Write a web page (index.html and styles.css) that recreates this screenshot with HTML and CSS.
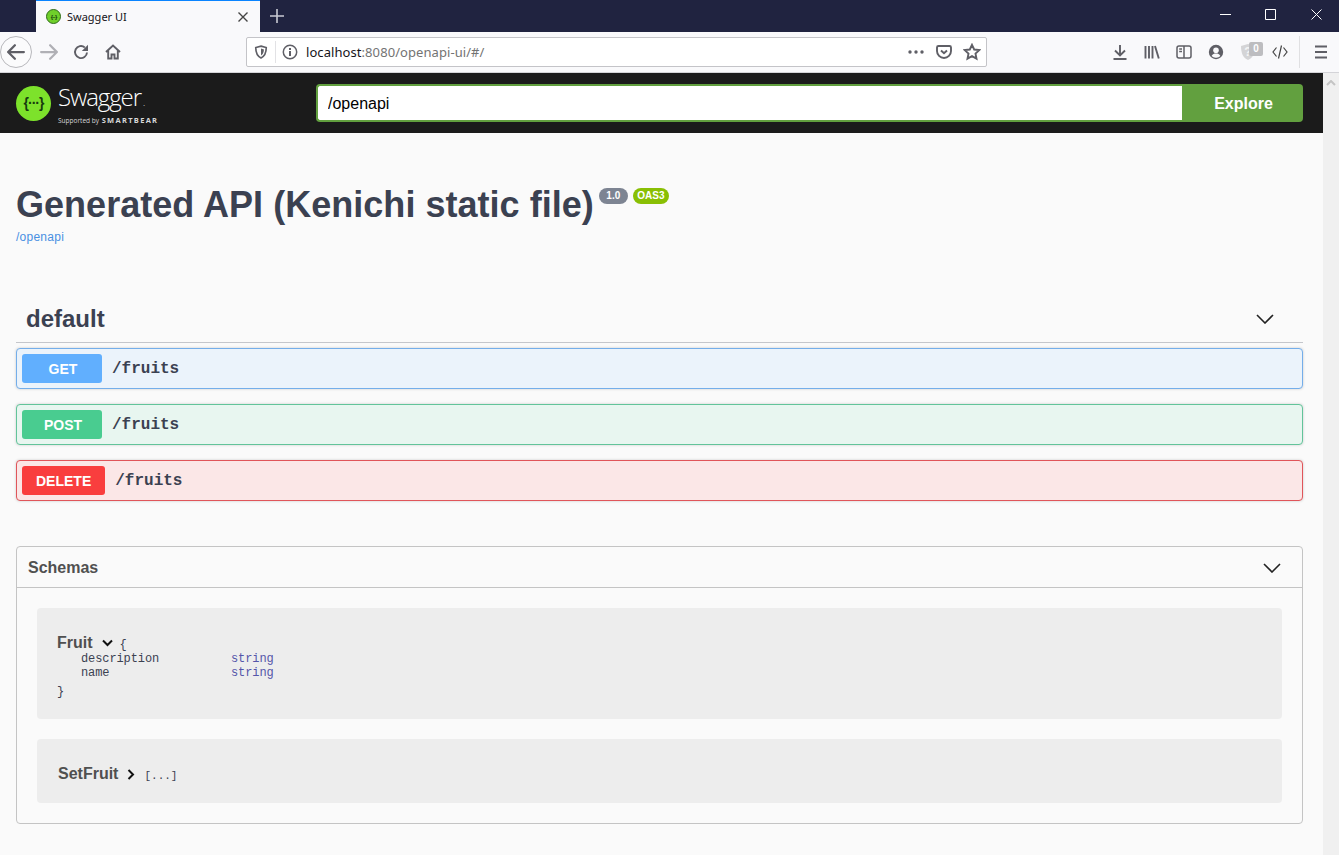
FILE: index.html
```html
<!DOCTYPE html>
<html lang="en">
<head>
    <meta charset="UTF-8">
    <meta name="viewport" content="width=device-width, initial-scale=1.0">
    <title>Swagger UI</title>
    <link rel="stylesheet" href="styles.css">
</head>
<body>
<div class="browser">
    <div class="tabbar">
        <div class="tab">
            <span class="favicon">{···}</span>
            <span class="tab-title">Swagger UI</span>
            <svg class="tab-close" width="12" height="12" viewBox="0 0 12 12"><path d="M1.5 1.5l9 9M10.5 1.5l-9 9"/></svg>
        </div>
        <svg class="tab-new" width="14" height="14" viewBox="0 0 14 14"><path d="M7 0v14M0 7h14"/></svg>
        <div class="window-controls">
            <div class="window-btn"><svg width="11" height="11" viewBox="0 0 11 11"><path d="M0 5.5h11"/></svg></div>
            <div class="window-btn"><svg width="11" height="11" viewBox="0 0 11 11"><path d="M.5.5h10v10H.5z"/></svg></div>
            <div class="window-btn"><svg width="11" height="11" viewBox="0 0 11 11"><path d="M.5.5l10 10M10.5.5l-10 10"/></svg></div>
        </div>
    </div>

    <div class="toolbar">
        <div class="nav-btn back">
            <svg width="18" height="18" viewBox="0 0 16 16"><path class="fill" d="M15 7H3.414l4.293-4.293a1 1 0 0 0-1.414-1.414l-6 6a1 1 0 0 0 0 1.414l6 6a1 1 0 0 0 1.414-1.414L3.414 9H15a1 1 0 0 0 0-2z"/></svg>
        </div>
        <div class="nav-btn forward">
            <svg width="18" height="18" viewBox="0 0 16 16"><path class="fill" d="M1 7h11.586L8.293 2.707a1 1 0 0 1 1.414-1.414l6 6a1 1 0 0 1 0 1.414l-6 6a1 1 0 0 1-1.414-1.414L12.586 9H1a1 1 0 0 1 0-2z"/></svg>
        </div>
        <div class="nav-btn">
            <svg width="16" height="16" viewBox="0 0 16 16"><path class="line" d="M14 8.5A6 6 0 1 1 11.8 3.4"/><path class="fill" d="M15 .8v6.2H8.8z"/></svg>
        </div>
        <div class="nav-btn">
            <svg width="16" height="16" viewBox="0 0 16 16"><path class="line" d="M1 8l7-6.5L15 8M3.2 6.5V14.5h3.3v-4h3v4h3.3V6.5"/></svg>
        </div>

        <div class="urlbar">
            <svg class="url-shield" width="14" height="14" viewBox="0 0 16 16"><path class="line" d="M8 1.3l6 1.6c0 6-1.6 9.800-6 11.900C3.600 12.700 2 8.900 2 2.900z"/><path class="fill" d="M8 4v8c2-1.300 3.200-3.500 3.400-6.800z"/></svg>
            <span class="url-sep"></span>
            <svg class="url-info" width="16" height="16" viewBox="0 0 16 16"><circle class="thin" cx="8" cy="8" r="6.700"/><path class="fill" d="M7 7h2v5H7zM7 4h2v2H7z"/></svg>
            <span class="url-text">localhost<span class="url-rest">:8080/openapi-ui/#/</span></span>
            <svg class="url-dots" width="16" height="4" viewBox="0 0 16 4"><circle class="fill" cx="2" cy="2" r="1.700"/><circle class="fill" cx="8" cy="2" r="1.700"/><circle class="fill" cx="14" cy="2" r="1.700"/></svg>
            <svg class="url-pocket" width="16" height="16" viewBox="0 0 16 16"><path class="line" d="M2.500 2h11A1.500 1.500 0 0 1 15 3.500V7A7 7 0 0 1 1 7V3.500A1.500 1.500 0 0 1 2.500 2z"/><path class="line" d="M5 6.500L8 9.300l3-2.800"/></svg>
            <svg class="url-star" width="18" height="18" viewBox="0 0 18 18"><path class="line" d="M9 1.800l2.200 4.700 5.100.6-3.800 3.500 1 5.100L9 13.200l-4.500 2.500 1-5.100L1.700 7.100l5.100-.6z"/></svg>
        </div>

        <div class="toolbar-right">
            <div class="tool-btn"><svg width="16" height="16" viewBox="0 0 16 16"><path class="line" d="M8 1v9.500M3 6.500l5 5 5-5M1.500 15h13"/></svg></div>
            <div class="tool-btn"><svg width="16" height="16" viewBox="0 0 16 16"><path class="line" d="M1.500 2v12.500M5 2v12.500M8.500 2v12.500M11 2l3.800 12.500"/></svg></div>
            <div class="tool-btn"><svg width="16" height="16" viewBox="0 0 16 16"><rect class="thin" x="1" y="2" width="14" height="12" rx="2"/><path class="thin" d="M8 2v12M3.200 5H6M3.200 7.500H6"/></svg></div>
            <div class="tool-btn"><svg width="16" height="16" viewBox="0 0 16 16"><circle class="fill" cx="8" cy="8" r="7.200"/><circle class="hole" cx="8" cy="6.300" r="2.800"/><path class="hole" d="M3.600 12c1-1.800 2.600-2.400 4.400-2.400s3.400.6 4.400 2.400A5.500 5.500 0 0 1 8 13.800 5.500 5.500 0 0 1 3.600 12z"/></svg></div>
            <div class="tool-btn ext">
                <svg width="18" height="18" viewBox="0 0 18 18"><path class="shield-grey" d="M9 1l7 2c0 7-2 12-7 14C4 15 2 10 2 3z"/><text x="9" y="13" class="shield-mark">?</text></svg>
                <span class="ext-badge">0</span>
            </div>
            <div class="tool-btn"><svg width="16" height="16" viewBox="0 0 16 16"><path class="thin-dark" d="M4.500 3.500L1 8l3.500 4.500M11.500 3.500L15 8l-3.500 4.500M9.500 1.500l-3 13"/></svg></div>
        </div>
        <span class="toolbar-sep"></span>
        <div class="tool-btn menu"><svg width="14" height="14" viewBox="0 0 14 14"><path class="line" d="M1 1.500h12M1 7h12M1 12.500h12"/></svg></div>
    </div>

    <div class="viewport">
        <div class="swagger">
            <div class="topbar">
                <div class="logo">
                    <span class="logo-mark">{···}</span>
                    <div class="logo-text">
                        <span class="logo-name">Swagger<small>.</small></span>
                        <span class="logo-sub">Supported by <b>SMARTBEAR</b></span>
                    </div>
                </div>
                <form class="search">
                    <input class="search-input" type="text" value="/openapi">
                    <button class="search-btn" type="button">Explore</button>
                </form>
            </div>

            <div class="content">
                <div class="info">
                    <div class="title">
                        <h2>Generated API (Kenichi static file)</h2>
                        <span class="version">1.0</span>
                        <span class="oas">OAS3</span>
                    </div>
                    <a class="base-url" href="#">/openapi</a>
                </div>

                <div class="tag">
                    <h3>default</h3>
                    <svg class="chevron" width="18" height="10" viewBox="0 0 18 10"><path d="M1 1l8 8 8-8"/></svg>
                </div>

                <div class="op op-get"><span class="method">GET</span><span class="path">/fruits</span></div>
                <div class="op op-post"><span class="method">POST</span><span class="path">/fruits</span></div>
                <div class="op op-delete"><span class="method">DELETE</span><span class="path">/fruits</span></div>

                <div class="schemas">
                    <div class="schemas-head">
                        <h4>Schemas</h4>
                        <svg class="chevron" width="18" height="10" viewBox="0 0 18 10"><path d="M1 1l8 8 8-8"/></svg>
                    </div>
                    <div class="schemas-body">
                        <div class="model model-open">
                            <div class="model-head">
                                <span class="model-name">Fruit</span>
                                <svg class="model-arrow" width="11" height="8" viewBox="0 0 11 8"><path d="M1 1.500l4.500 4.500L10 1.500"/></svg>
                                <span class="brace">{</span>
                            </div>
                            <div class="prop"><span class="prop-name">description</span><span class="prop-type">string</span></div>
                            <div class="prop"><span class="prop-name">name</span><span class="prop-type">string</span></div>
                            <div class="brace brace-end">}</div>
                        </div>
                        <div class="model model-closed">
                            <span class="model-name">SetFruit</span>
                            <svg class="model-arrow arrow-right" width="8" height="11" viewBox="0 0 8 11"><path d="M1.500 1L6 5.500 1.500 10"/></svg>
                            <span class="brace">[...]</span>
                        </div>
                    </div>
                </div>
            </div>
        </div>
        <div class="scrollbar">
            <svg width="10" height="6" viewBox="0 0 10 6"><path d="M1 5l4-4 4 4"/></svg>
        </div>
    </div>
</div>
</body>
</html>
```

FILE: styles.css
```css
html, body {
    margin: 0;
    height: 100%;
    overflow: hidden;
}
body {
    font-family: "Liberation Sans", Arial, sans-serif;
    background: #fafafa;
}
.browser {
    display: flex;
    flex-direction: column;
    height: 100%;
}

/* browser chrome */
.tabbar {
    display: flex;
    align-items: center;
    height: 32px;
    padding-left: 36px;
    background: #202340;
}
.tab {
    display: flex;
    align-items: center;
    box-sizing: border-box;
    width: 224px;
    height: 32px;
    padding: 0 11px 0 10px;
    background: #f9f9fb;
    border-top: 1px solid #0a84ff;
}
.favicon {
    display: flex;
    align-items: center;
    justify-content: center;
    box-sizing: border-box;
    width: 15px;
    height: 15px;
    border-radius: 50%;
    background: #6fcf2a;
    border: 1px solid #2f6b1a;
    color: #173b0f;
    font-size: 6px;
    font-weight: bold;
    letter-spacing: -1px;
}
.tab-title {
    flex: 1;
    margin-left: 6px;
    font-family: "Noto Sans", sans-serif;
    font-size: 11px;
    color: #15141a;
}
.tab-close path {
    fill: none;
    stroke: #444;
    stroke-width: 1.4;
}
.tab-new {
    margin-left: 10px;
}
.tab-new path {
    fill: none;
    stroke: #c9cad3;
    stroke-width: 1.6;
}
.window-controls {
    display: flex;
    box-sizing: border-box;
    width: 137px;
    margin-left: auto;
    padding-left: 1px;
}
.window-btn {
    flex: 1;
    display: flex;
    justify-content: center;
    margin-top: -3px;
}
.window-btn path {
    fill: none;
    stroke: #fff;
    stroke-width: 1;
}
.toolbar {
    display: flex;
    align-items: center;
    box-sizing: border-box;
    height: 41px;
    background: #f9f9fb;
    border-bottom: 1px solid #d4d4d8;
}
.fill {
    fill: #5f5f66;
}
.line {
    fill: none;
    stroke: #5f5f66;
    stroke-width: 1.9;
}
.thin {
    fill: none;
    stroke: #5f5f66;
    stroke-width: 1.5;
}
.thin-dark {
    fill: none;
    stroke: #444;
    stroke-width: 1.2;
}
.hole {
    fill: #f9f9fb;
}
.nav-btn {
    display: flex;
    align-items: center;
    justify-content: center;
    box-sizing: border-box;
    width: 32px;
    height: 32px;
}
.nav-btn.back {
    border: 1px solid #b8b8bc;
    border-radius: 50%;
    background: #fbfbfc;
}
.nav-btn.forward {
    margin-left: 1px;
}
.nav-btn.forward .fill {
    fill: #b0b0b5;
}
.urlbar {
    display: flex;
    align-items: center;
    box-sizing: border-box;
    width: 741px;
    height: 30px;
    margin-left: 117px;
    padding: 0 5px 0 7px;
    background: #fff;
    border: 1px solid #c4c4c8;
    border-radius: 2px;
}
.url-sep {
    width: 1px;
    height: 22px;
    margin: 0 6px 0 7px;
    background: #e2e2e5;
}
.url-text {
    flex: 1;
    margin-left: 8px;
    font-family: "Noto Sans", sans-serif;
    font-size: 13px;
    letter-spacing: 0.07px;
    color: #15141a;
}
.url-rest {
    color: #737373;
}
.url-pocket {
    margin-left: 12px;
}
.url-star {
    margin-left: 11px;
}
.toolbar-right {
    display: flex;
    margin-left: 117px;
}
.tool-btn {
    position: relative;
    display: flex;
    align-items: center;
    justify-content: center;
    width: 32px;
    height: 32px;
}
.shield-grey {
    fill: #d4d4d6;
}
.shield-mark {
    font-size: 12px;
    font-weight: bold;
    fill: #f4f4f4;
    text-anchor: middle;
}
.ext-badge {
    position: absolute;
    top: 6px;
    right: 1px;
    width: 14px;
    height: 14px;
    border-radius: 2px;
    background: #bdbdc0;
    color: #fff;
    font-size: 10px;
    font-weight: bold;
    line-height: 14px;
    text-align: center;
}
.toolbar-sep {
    width: 1px;
    height: 32px;
    margin: 0 5px 0 3px;
    background: #e0e0e2;
}

/* page */
.viewport {
    flex: 1;
    display: flex;
    min-height: 0;
}
.swagger {
    flex: 1;
    min-width: 0;
    background: #fafafa;
}
.scrollbar {
    width: 16px;
    background: #f0f0f0;
    padding-top: 7px;
    box-sizing: border-box;
}
.scrollbar svg {
    display: block;
    margin: 0 auto;
}
.scrollbar path {
    fill: none;
    stroke: #c4c4c4;
    stroke-width: 2;
}
.topbar {
    display: flex;
    align-items: center;
    box-sizing: border-box;
    height: 60px;
    padding: 0 20px 0 16px;
    background: #1b1b1b;
}
.logo {
    display: flex;
    align-items: center;
    width: 300px;
}
.logo-mark {
    display: flex;
    align-items: center;
    justify-content: center;
    width: 35px;
    height: 35px;
    border-radius: 50%;
    background: #7de22b;
    color: #173b0f;
    font-size: 14px;
    font-weight: bold;
    letter-spacing: -1px;
}
.logo-text {
    display: flex;
    flex-direction: column;
    margin-left: 7px;
    padding-top: 3px;
    color: #fff;
}
.logo-name {
    font-family: "Open Sans", sans-serif;
    font-size: 24px;
    font-weight: 300;
    line-height: 26px;
    letter-spacing: -1.1px;
}
.logo-name small {
    font-size: 9px;
    margin-left: 2px;
}
.logo-sub {
    font-family: "Open Sans", sans-serif;
    font-size: 6.5px;
    line-height: 9px;
    color: #d8d8d8;
}
.logo-sub b {
    margin-left: 1px;
    font-size: 7.5px;
    letter-spacing: 1.3px;
}
.search {
    flex: 1;
    display: flex;
    height: 38px;
}
.search-input {
    flex: 1;
    min-width: 0;
    box-sizing: border-box;
    padding: 2px 10px 0;
    background: #fff;
    border: 2px solid #62a03f;
    border-right: 0;
    border-radius: 4px 0 0 4px;
    font-family: "Liberation Sans", Arial, sans-serif;
    font-size: 16px;
    color: #000;
    outline: none;
}
.search-btn {
    width: 121px;
    padding: 2px 0 0 2px;
    background: #62a03f;
    border: 0;
    border-radius: 0 4px 4px 0;
    font-family: "Liberation Sans", Arial, sans-serif;
    font-size: 16px;
    font-weight: bold;
    color: #fff;
}
.content {
    padding: 0 20px 0 16px;
}
.info {
    padding-top: 50px;
}
.title {
    display: flex;
    align-items: flex-start;
    color: #3b4151;
}
.title h2 {
    margin: 0;
    font-size: 36px;
    line-height: 43px;
    font-weight: bold;
    letter-spacing: 0.03px;
}
.version, .oas {
    height: 16px;
    margin-top: 5px;
    border-radius: 57px;
    color: #fff;
    font-size: 10px;
    font-weight: bold;
    line-height: 16px;
}
.version {
    margin-left: 5px;
    padding: 0 7.5px;
    background: #7d8492;
}
.oas {
    margin-left: 5px;
    padding: 0 4.5px;
    background: #89bf04;
}
.base-url {
    display: block;
    margin-top: 4px;
    font-size: 12px;
    line-height: 14px;
    letter-spacing: 0.25px;
    color: #4990e2;
    text-decoration: none;
}
.tag {
    display: flex;
    align-items: center;
    justify-content: space-between;
    box-sizing: border-box;
    height: 47px;
    margin-top: 52px;
    margin-bottom: 5px;
    padding: 0 29px 1px 10px;
    border-bottom: 1px solid #c4c6cb;
}
.tag h3 {
    margin: 0;
    font-size: 24px;
    font-weight: bold;
    color: #3b4151;
}
.chevron path {
    fill: none;
    stroke: #222;
    stroke-width: 1.6;
}
.op {
    display: flex;
    align-items: center;
    box-sizing: border-box;
    height: 41px;
    margin-bottom: 15px;
    padding: 0 5px;
    border: 1px solid;
    border-radius: 4px;
    box-shadow: 0 0 3px rgba(0, 0, 0, 0.19);
}
.op-get {
    background: #ebf3fb;
    border-color: #74aeea;
}
.op-post {
    background: #e8f6f0;
    border-color: #62c49a;
}
.op-delete {
    background: #fbe7e7;
    border-color: #e0555a;
}
.method {
    box-sizing: border-box;
    min-width: 80px;
    height: 29px;
    padding: 0 14px 0 15px;
    border-radius: 3px;
    color: #fff;
    font-size: 14px;
    font-weight: bold;
    line-height: 30px;
    text-align: center;
    text-indent: 1px;
}
.op-delete .method {
    padding: 0 14px;
    text-indent: 0;
}
.op-get .method {
    background: #61affe;
}
.op-post .method {
    background: #49cc90;
}
.op-delete .method {
    background: #f93e3e;
}
.path {
    padding-left: 10px;
    font-family: "Liberation Mono", monospace;
    font-size: 16px;
    font-weight: bold;
    color: #3b4151;
}
.schemas {
    margin-top: 45px;
    border: 1px solid #c4c4c4;
    border-radius: 4px;
}
.schemas-head {
    display: flex;
    align-items: center;
    justify-content: space-between;
    box-sizing: border-box;
    height: 41px;
    padding: 2px 21px 0 11px;
    border-bottom: 1px solid #c4c4c4;
}
.schemas-head h4 {
    margin: 0;
    font-size: 16px;
    font-weight: bold;
    color: #505050;
}
.schemas-body {
    padding: 20px;
}
.model {
    box-sizing: border-box;
    padding: 0 20px;
    background: #ededed;
    border-radius: 4px;
    font-family: "Liberation Mono", monospace;
    font-size: 12px;
    color: #3b4151;
}
.model-open {
    height: 111px;
    margin-bottom: 20px;
    padding-top: 26px;
}
.model-closed {
    display: flex;
    align-items: center;
    height: 64px;
    padding-left: 21px;
    padding-top: 6px;
}
.model-head {
    display: flex;
    align-items: center;
    height: 18px;
}
.model-name {
    font-family: "Liberation Sans", Arial, sans-serif;
    font-size: 16px;
    font-weight: bold;
    color: #505050;
}
.model-arrow {
    margin-left: 9px;
}
.model-arrow path {
    fill: none;
    stroke: #111;
    stroke-width: 2;
}
.model-head .brace {
    margin-left: 7px;
    padding-top: 3px;
}
.model-closed .brace {
    margin-left: 9px;
    padding-top: 3px;
    font-size: 11px;
}
.prop {
    display: flex;
    height: 14px;
    padding-left: 24px;
    line-height: 14px;
    letter-spacing: -0.1px;
}
.prop-name {
    width: 150px;
}
.prop-type {
    color: #55a;
}
.brace-end {
    margin-top: 5px;
    line-height: 14px;
}
```
